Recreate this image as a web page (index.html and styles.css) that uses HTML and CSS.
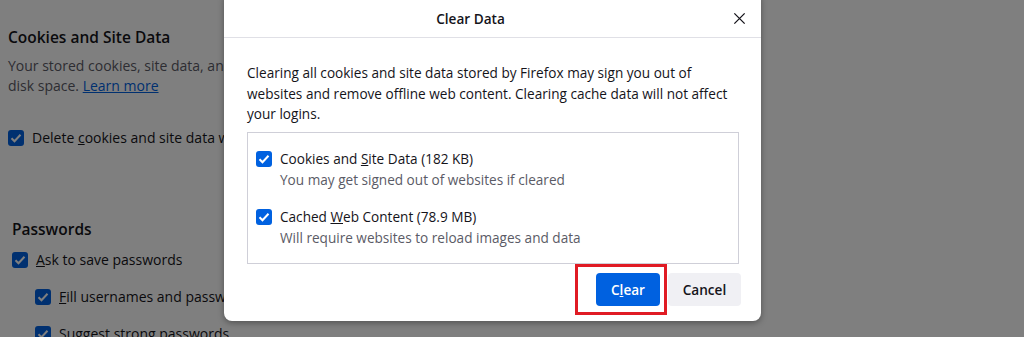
FILE: index.html
```html
<!DOCTYPE html>
<html>
<head>
<meta charset="utf-8">
<link rel="stylesheet" href="styles.css">
</head>
<body>
<div class="page">
  <section class="sec">
    <h2 class="h">Cookies and Site Data</h2>
    <p class="desc">Your stored cookies, site data, and cache are currently using 80.1 MB of<br>disk space. <a href="#" class="link">Learn more</a></p>
    <label class="row first"><span class="cb"><svg viewBox="0 0 16 16"><path d="M3.5 8.2l3 3 6-6.4" fill="none" stroke="#fff" stroke-width="2"/></svg></span><span>Delete <u>c</u>ookies and site data when Firefox is closed</span></label>
  </section>
  <section class="sec pw">
    <h2 class="h">Passwords</h2>
    <label class="row"><span class="cb"><svg viewBox="0 0 16 16"><path d="M3.5 8.2l3 3 6-6.4" fill="none" stroke="#fff" stroke-width="2"/></svg></span><span><u>A</u>sk to save passwords</span></label>
    <label class="row sub"><span class="cb"><svg viewBox="0 0 16 16"><path d="M3.5 8.2l3 3 6-6.4" fill="none" stroke="#fff" stroke-width="2"/></svg></span><span><u>F</u>ill usernames and passwords automatically</span></label>
    <label class="row sub"><span class="cb"><svg viewBox="0 0 16 16"><path d="M3.5 8.2l3 3 6-6.4" fill="none" stroke="#fff" stroke-width="2"/></svg></span><span>Suggest strong passwords</span></label>
  </section>
</div>
<div class="overlay"></div>
<div class="dialog">
  <div class="dhead">
    <span class="title">Clear Data</span>
    <svg class="close" viewBox="0 0 16 16"><path d="M2.5 2.5l11 11M13.5 2.5l-11 11" stroke="#15141a" stroke-width="1.4" fill="none"/></svg>
  </div>
  <div class="dbody">
    <p class="intro">Clearing all cookies and site data stored by Firefox may sign you out of websites and remove offline web content. Clearing cache data will not affect your logins.</p>
    <div class="box">
      <div class="opt">
        <span class="cb"><svg viewBox="0 0 16 16"><path d="M3.5 8.2l3 3 6-6.4" fill="none" stroke="#fff" stroke-width="2"/></svg></span>
        <div class="otext">
          <div class="olabel">Cookies and <u>S</u>ite Data (182 KB)</div>
          <div class="odesc">You may get signed out of websites if cleared</div>
        </div>
      </div>
      <div class="opt">
        <span class="cb"><svg viewBox="0 0 16 16"><path d="M3.5 8.2l3 3 6-6.4" fill="none" stroke="#fff" stroke-width="2"/></svg></span>
        <div class="otext">
          <div class="olabel">Cached <u>W</u>eb Content (78.9 MB)</div>
          <div class="odesc">Will require websites to reload images and data</div>
        </div>
      </div>
    </div>
    <div class="actions">
      <button class="btn primary">C<u>l</u>ear</button>
      <button class="btn">Cancel</button>
    </div>
  </div>
</div>
<div class="highlight"></div>
</body>
</html>
```
FILE: styles.css
```css
html, body {
  margin: 0;
  padding: 0;
  width: 1024px;
  height: 337px;
  overflow: hidden;
  background: #fff;
  font-family: "Open Sans", "Noto Sans", sans-serif;
  color: #15141a;
}
.page {
  padding: 0 0 0 8px;
  font-size: 14px;
}
.sec { margin: 0; }
.h {
  font-size: 15.5px;
  font-weight: 600;
  margin: 0;
  padding-top: 25px;
  line-height: 24px;
}
.desc {
  margin: 7px 0 0;
  color: #5b5b66;
  line-height: 20px;
  white-space: nowrap;
}
.link { color: #0061e0; }
.row {
  display: flex;
  align-items: center;
  gap: 8px;
  line-height: 20px;
  white-space: nowrap;
}
.row.first { margin-top: 32px; }
.pw { padding-left: 4px; }
.pw .h { padding-top: 69px; }
.pw .row { margin-top: 9px; }
.pw .row.sub { margin-left: 23px; margin-top: 17px; }
.cb {
  width: 16px;
  height: 16px;
  border-radius: 3px;
  background: #0061e0;
  display: inline-flex;
  flex: none;
}
.cb svg { width: 16px; height: 16px; }
.overlay {
  position: absolute;
  inset: 0;
  background: rgba(0, 0, 0, 0.5);
}
.dialog {
  position: absolute;
  left: 224px;
  top: -8px;
  width: 537px;
  height: 329px;
  background: #fff;
  border-radius: 8px;
  box-shadow: 0 2px 6px rgba(0,0,0,0.35);
  font-size: 13.6px;
}
.dhead {
  height: 46px;
  box-sizing: border-box;
  padding: 8px 44px 0 0;
  border-bottom: 1px solid #e0e0e6;
  display: flex;
  align-items: center;
  justify-content: center;
  position: relative;
}
.title {
  font-weight: 600;
  font-size: 13.6px;
}
.close {
  position: absolute;
  right: 14px;
  top: 19px;
  width: 15px;
  height: 15px;
}
.dbody {
  padding: 0 23px;
}
.intro {
  margin: 25px 0 0;
  line-height: 20.5px;
}
.box {
  margin-top: 7px;
  border: 1px solid #cfcfd8;
  height: 132px;
  box-sizing: border-box;
  width: 492px;
  padding: 16px 0 0 8px;
}
.opt {
  display: flex;
  gap: 8px;
  margin-bottom: 16px;
}
.opt .cb { margin-top: 2px; }
.olabel { line-height: 20px; }
.odesc { color: #5b5b66; line-height: 22px; }
.actions {
  display: flex;
  justify-content: flex-end;
  gap: 8px;
  margin-top: 9px;
  margin-right: -3px;
}
.btn {
  font-family: inherit;
  font-size: 13.6px;
  font-weight: 600;
  border: none;
  border-radius: 4px;
  height: 33px;
  padding: 0;
  background: #f0f0f4;
  color: #15141a;
  width: 73px;
}
.btn.primary {
  background: #0061e0;
  color: #fff;
  width: 64px;
}
.highlight {
  position: absolute;
  left: 575px;
  top: 264px;
  width: 86px;
  height: 45px;
  border: 3px solid #e01b24;
}
```
